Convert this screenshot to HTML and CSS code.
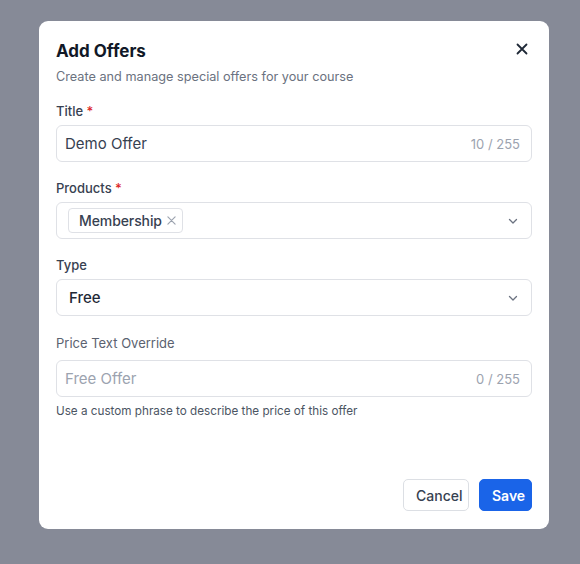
FILE: index.html
```html
<!DOCTYPE html>
<html lang="en">
<head>
  <meta charset="UTF-8" />
  <meta name="viewport" content="width=device-width, initial-scale=1.0" />
  <title>Add Offers</title>
  <link rel="stylesheet" href="styles.css">
</head>
<body>
  <div class="modal">
    <div class="modal-head">
      <h2 class="modal-title">Add Offers</h2>
      <button class="close-btn" aria-label="Close">
        <svg width="12" height="12" viewBox="0 0 12 12"><path d="M1.5 1.5l9 9M10.5 1.5l-9 9" stroke="#1f2937" stroke-width="1.8" stroke-linecap="round"/></svg>
      </button>
    </div>
    <p class="modal-sub">Create and manage special offers for your course</p>

    <div class="field">
      <label class="label">Title <span class="req">*</span></label>
      <div class="input">
        <span class="value">Demo Offer</span>
        <span class="count">10 / 255</span>
      </div>
    </div>

    <div class="field">
      <label class="label">Products <span class="req">*</span></label>
      <div class="input input-select">
        <span class="chip">Membership
          <svg class="chip-x" width="9" height="9" viewBox="0 0 10 10"><path d="M1 1l8 8M9 1l-8 8" stroke="#9ca3af" stroke-width="1.3" stroke-linecap="round"/></svg>
        </span>
        <svg class="chev" width="12" height="12" viewBox="0 0 12 12"><path d="M2.5 4.5l3.5 3.5 3.5-3.5" fill="none" stroke="#6b7280" stroke-width="1.3" stroke-linecap="round" stroke-linejoin="round"/></svg>
      </div>
    </div>

    <div class="field">
      <label class="label">Type</label>
      <div class="input input-select">
        <span class="value value-dark">Free</span>
        <svg class="chev" width="12" height="12" viewBox="0 0 12 12"><path d="M2.5 4.5l3.5 3.5 3.5-3.5" fill="none" stroke="#6b7280" stroke-width="1.3" stroke-linecap="round" stroke-linejoin="round"/></svg>
      </div>
    </div>

    <div class="field field-last">
      <label class="label label-muted label-loose">Price Text Override</label>
      <div class="input">
        <span class="value placeholder">Free Offer</span>
        <span class="count">0 / 255</span>
      </div>
      <p class="help">Use a custom phrase to describe the price of this offer</p>
    </div>

    <div class="modal-foot">
      <button class="btn btn-cancel">Cancel</button>
      <button class="btn btn-save">Save</button>
    </div>
  </div>
</body>
</html>
```

FILE: styles.css
```css
* {
  box-sizing: border-box;
}
body {
  margin: 0;
  height: 564px;
  background: #868a97;
  font-family: Inter, "Noto Sans", sans-serif;
  padding: 21px 0 0 39px;
}
.modal {
  width: 510px;
  height: 508px;
  background: #fff;
  border-radius: 9px;
  padding: 18px 17px 18px 17px;
  display: flex;
  flex-direction: column;
}
.modal-head {
  display: flex;
  justify-content: space-between;
  align-items: flex-start;
}
.modal-title {
  margin: 0;
  font-size: 17px;
  line-height: 24px;
  font-weight: 700;
  color: #111827;
}
.close-btn {
  border: 0;
  background: none;
  padding: 0;
  margin: 4px 4px 0 0;
  width: 12px;
  height: 12px;
  display: flex;
}
.modal-sub {
  margin: 5px 0 16px;
  font-size: 12.7px;
  line-height: 18px;
  color: #6b7280;
}
.field {
  margin-bottom: 17px;
}
.field-last {
  margin-top: 1px;
}
.label {
  display: block;
  font-size: 13px;
  line-height: 18px;
  font-weight: 500;
  color: #374151;
  margin-bottom: 5px;
}
.label-muted {
  color: #5b6270;
  font-weight: 400;
}
.label-loose {
  margin-bottom: 8px;
}
.req {
  color: #dc2626;
}
.input {
  height: 37px;
  border: 1px solid #dfe1e6;
  border-radius: 6px;
  display: flex;
  align-items: center;
  justify-content: space-between;
  padding: 0 11px 0 8px;
}
.value {
  font-size: 15px;
  color: #374151;
}
.value-dark {
  color: #1f2937;
  font-weight: 500;
  padding-left: 1px;
}
.placeholder {
  color: #9ca3af;
}
.count {
  font-size: 13px;
  color: #9ca3af;
}
.input-select {
  padding: 0 12px 0 11px;
}
.chip {
  display: inline-flex;
  align-items: center;
  height: 25px;
  padding: 0 6px 0 10px;
  border: 1px solid #dfe1e6;
  border-radius: 4px;
  font-size: 14px;
  font-weight: 500;
  color: #374151;
  letter-spacing: -0.1px;
}
.chip-x {
  margin-left: 5px;
}
.help {
  margin: 6px 0 0;
  font-size: 11.7px;
  line-height: 16px;
  color: #4b5563;
}
.modal-foot {
  margin-top: auto;
  display: flex;
  justify-content: flex-end;
  gap: 10px;
}
.btn {
  height: 32px;
  border-radius: 5px;
  font-family: inherit;
  font-size: 14px;
  font-weight: 500;
  padding: 0 12px;
}
.btn-cancel {
  background: #fff;
  border: 1px solid #dcdfe4;
  color: #374151;
  width: 66px;
}
.btn-save {
  background: #1a64e8;
  border: 1px solid #1a64e8;
  color: #fff;
  font-weight: 600;
  width: 53px;
}
```
